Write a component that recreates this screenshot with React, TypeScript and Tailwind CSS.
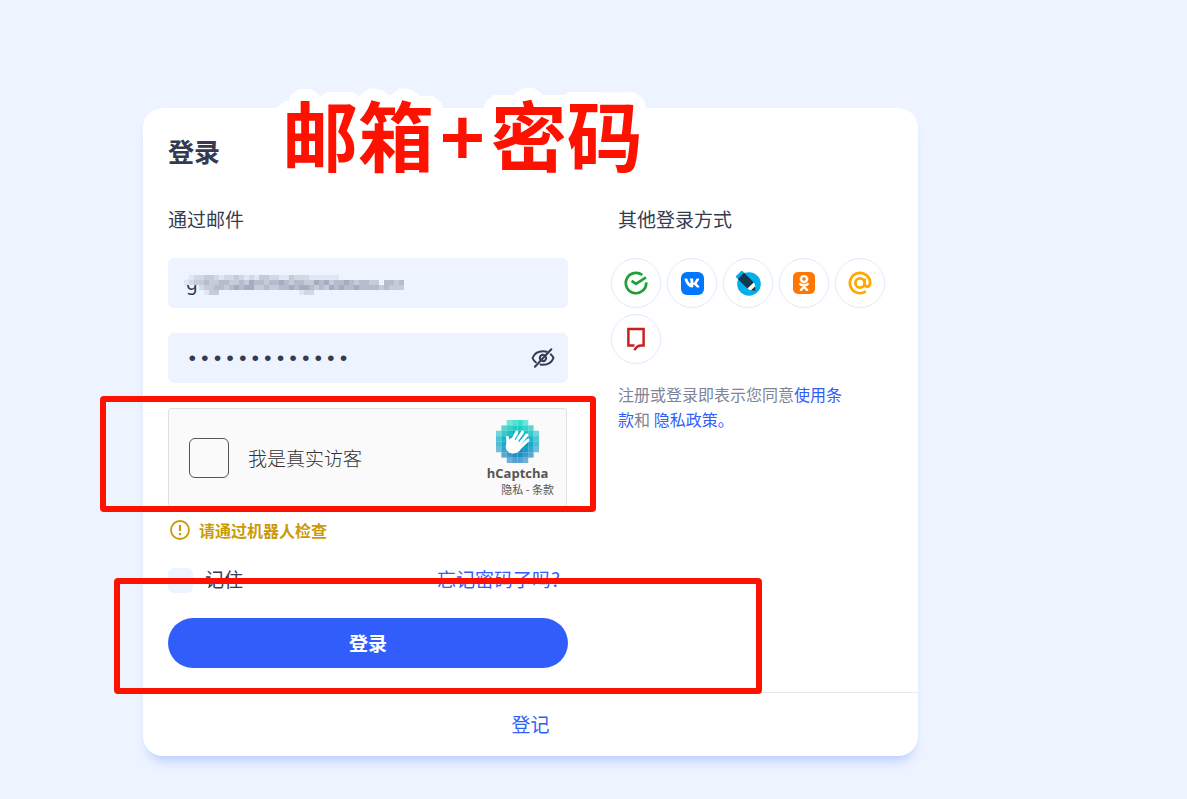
import React, { useState } from 'react';
import { FaOdnoklassniki, FaVk } from 'react-icons/fa';

// 0 is an empty cell, 5 is the darkest one
const mosaicRows = [
  '01223321223212133221132221111110000000000000',
  '12334334433435443445434433545344543443304434',
  '00023344345455334334454554343545445444434333',
  '00001330000000000000000122000000000000000000',
];
const mosaicColors = ['transparent', '#dfe7f4', '#d2d9e6', '#c5cbd9', '#b6bccb', '#a5acbe'];

const captchaRows = [
  { color: '#00D4BF', cells: '00567500' },
  { color: '#00C6BF', cells: '06788760' },
  { color: '#00B9BF', cells: '57899875' },
  { color: '#00ABBF', cells: '68999986' },
  { color: '#009DBF', cells: '68999986' },
  { color: '#008FBF', cells: '57899875' },
  { color: '#0082BF', cells: '06788760' },
  { color: '#0074BF', cells: '00566500' },
];

// Rounded white rim round the big caption
const rim = [6, 12]
  .flatMap((radius) =>
    Array.from({ length: 24 }, (_, i) => {
      const angle = (i * Math.PI) / 12;
      return `${(Math.cos(angle) * radius).toFixed(1)}px ${(Math.sin(angle) * radius).toFixed(1)}px 0 #fff`;
    })
  )
  .join(', ');

function Mosaic() {
  return (
    <svg
      viewBox="0 0 220 20"
      shapeRendering="crispEdges"
      className="absolute left-4 top-[17px] w-[220px] h-5 pointer-events-none"
      aria-hidden="true"
    >
      {mosaicRows.map((row, y) =>
        row.split('').map((level, x) => (
          <rect key={`${x}-${y}`} x={x * 5} y={y * 5} width="5" height="5" fill={mosaicColors[Number(level)]} />
        ))
      )}
    </svg>
  );
}

function CaptchaLogo() {
  return (
    <svg viewBox="0 0 32 32" className="w-[43px] h-[43px]" aria-hidden="true">
      {captchaRows.map((row, y) =>
        row.cells.split('').map((cell, x) => (
          <rect key={`${x}-${y}`} x={x * 4} y={y * 4} width="4" height="4" fill={row.color} opacity={Number(cell) / 9} />
        ))
      )}
      <g stroke="#fff" strokeWidth="2.3" strokeLinecap="round" fill="none">
        <path d="M11.500 16.500L15.500 9" />
        <path d="M14 17.500L19.700 9" />
        <path d="M16.500 19L23 11.200" />
        <path d="M17.500 21L23.800 15" />
        <path d="M8.800 19C9.200 16.500 9 14.800 8.500 13" />
      </g>
      <path
        d="M7.700 17.500c.8-1.700 2.200-2.800 3.500-4.300l9 5.100-2 3.900c-1.700 2.300-4.200 3.100-6.700 2.600C7.900 24 6.400 20.700 7.700 17.500z"
        fill="#fff"
      />
    </svg>
  );
}

function EyeOffIcon() {
  return (
    <svg viewBox="0 0 24 20" className="w-6 h-5" fill="none" stroke="#343b50" strokeWidth="2" strokeLinecap="round">
      <path d="M4.800 14.300C3.200 13 2 11.300 1.500 10 3 6.200 7 3.200 12 3.200c1.400 0 2.600.2 3.800.6" />
      <path d="M19.700 6.300c1.300 1.100 2.300 2.500 2.800 3.700-1.500 3.800-5.500 6.800-10.500 6.800-.9 0-1.700-.1-2.500-.3" />
      <path d="M9.200 11.500a3.200 3.200 0 0 1 4.300-4.300M15.100 9.300a3.200 3.200 0 0 1-3.700 3.800" />
      <path d="M20.300 1.200L3.900 18.800" />
    </svg>
  );
}

function WarningIcon() {
  return (
    <svg viewBox="0 0 20 20" className="w-5 h-5" fill="none" stroke="#cc9a06" strokeWidth="1.800">
      <circle cx="10" cy="10" r="9" />
      <path d="M10 5v6" strokeWidth="2.200" />
      <path d="M10 13v2.200" strokeWidth="2.200" />
    </svg>
  );
}

function SberIcon() {
  return (
    <svg viewBox="0 0 24 24" className="w-6 h-6" fill="none" stroke="#21a038" strokeWidth="2.700">
      <path d="M18.300 4A10.200 10.200 0 1 0 22.200 11.300" />
      <path d="M7.600 9.800l4.400 3 10-6.500" />
    </svg>
  );
}

function VkIcon() {
  return (
    <span className="flex items-center justify-center w-[23px] h-[23px] rounded-[6px] bg-[#0077ff]">
      <FaVk className="w-4 h-4 text-white" />
    </span>
  );
}

function LiveJournalIcon() {
  return (
    <svg viewBox="0 0 26 26" className="w-[26px] h-[26px]">
      <circle cx="14" cy="14" r="11.800" fill="#00b0ea" />
      <path d="M1 6L6 1.300q1-.9 2 .1L9.500 3 3 9 1.300 7.600Q.4 6.800 1 6z" fill="#00b0ea" />
      <path d="M9 2.800L18.800 12.500 12.500 18.500 2.800 9z" fill="#15374a" />
      <path d="M18.800 12.500q1.700 2 1.800 8.500-6-.3-8.100-2.500z" fill="#fff" />
      <path d="M20.200 16.300l.5 4.800-5-.5z" fill="#15374a" />
    </svg>
  );
}

function OkIcon() {
  return (
    <span className="flex items-center justify-center w-[22px] h-[22px] rounded-[5px] bg-[#ff7700]">
      <FaOdnoklassniki className="w-4 h-4 text-white" stroke="#fff" strokeWidth="18" />
    </span>
  );
}

function MailIcon() {
  return (
    <svg viewBox="0 0 24 24" className="w-6 h-6" fill="none" stroke="#ffa800" strokeWidth="2.800">
      <circle cx="12" cy="12" r="4.600" />
      <path d="M16.600 7.500v5.200c0 4.100 5.500 3.600 5.500-.7A10.100 10.100 0 1 0 17.800 20.300" />
    </svg>
  );
}

function RamblerIcon() {
  return (
    <svg viewBox="0 0 20 24" className="w-5 h-6" fill="none" stroke="#c8201e" strokeWidth="2.500">
      <path d="M8.500 18.400H2.400V2.100h15.200v16.300h-2.100c-3.600 0-5.600 1.300-7 4.800" />
    </svg>
  );
}

const providers = [
  { name: 'Sber ID', icon: <SberIcon /> },
  { name: 'VK', icon: <VkIcon /> },
  { name: 'LiveJournal', icon: <LiveJournalIcon /> },
  { name: 'OK', icon: <OkIcon /> },
  { name: 'Mail', icon: <MailIcon /> },
  { name: 'Rambler', icon: <RamblerIcon /> },
];

function Captcha() {
  return (
    <div className="mt-[25px] mr-px h-[99px] flex items-center justify-between rounded border border-b-0 border-[#e0e0e0] bg-[#fafafa] pl-5 pr-3">
      <label className="flex items-center gap-[19px] text-[19px] leading-6 font-light text-[#333]">
        <input
          type="checkbox"
          className="appearance-none w-10 h-10 rounded-[6px] border border-[#555] bg-[#fafafa]"
        />
        我是真实访客
      </label>
      <div className="flex flex-col items-center pb-0.5">
        <CaptchaLogo />
        <span className="font-['Open_Sans','Noto_Sans_CJK_SC',sans-serif] text-[13px] leading-5 font-bold text-[#555]">
          hCaptcha
        </span>
        <span className="pl-5 text-[11px] leading-3 text-[#555] whitespace-nowrap">
          <a href="#privacy">隐私</a> - <a href="#terms">条款</a>
        </span>
      </div>
    </div>
  );
}

export default function App() {
  const [email, setEmail] = useState('g');
  const [password, setPassword] = useState('1234567890123');
  const [visible, setVisible] = useState(false);

  return (
    <div className="min-h-screen bg-[#edf4ff] pt-[108px] pb-[43px] pl-[143px] pr-4 font-['Noto_Sans_CJK_SC',sans-serif] text-[19px] text-[#343b50]">
      <main className="relative w-full max-w-[775px] rounded-[20px] bg-white shadow-[0_10px_12px_-6px_rgba(48,96,255,0.3)]">
        <div className="px-[25px] pt-6 pb-6">
          <h1 className="text-[26px] leading-[38px] font-bold">登录</h1>
          <div className="mt-[37px] flex gap-[43px]">
            <form className="w-[400px] shrink-0" onSubmit={(e) => e.preventDefault()}>
              <h2 className="leading-6">通过邮件</h2>
              <div className="relative mt-[27px]">
                <input
                  type="text"
                  aria-label="邮件"
                  value={email}
                  onChange={(e) => setEmail(e.target.value)}
                  className="block w-full h-[50px] rounded-[6px] bg-[#edf4ff] px-[18px] font-['Noto_Sans','Noto_Sans_CJK_SC',sans-serif] text-[19px]"
                />
                <Mosaic />
              </div>
              <div className="mt-[25px] flex items-center h-[50px] rounded-[6px] bg-[#edf4ff] pl-[18px] pr-[13px]">
                <input
                  type={visible ? 'text' : 'password'}
                  aria-label="密码"
                  value={password}
                  onChange={(e) => setPassword(e.target.value)}
                  className="flex-1 min-w-0 pt-1 bg-transparent font-['Liberation_Mono',monospace] text-[21px]"
                />
                <button type="button" aria-label="显示密码" onClick={() => setVisible(!visible)}>
                  <EyeOffIcon />
                </button>
              </div>

              <Captcha />

              <p className="mt-[13px] pl-0.5 flex items-center gap-[9px] text-base leading-5 font-bold text-[#cc9a06]">
                <WarningIcon />
                请通过机器人检查
              </p>
              <div className="mt-7 flex items-start justify-between h-[25px] pr-2">
                <label className="flex items-start gap-3 leading-[22px]">
                  <input type="checkbox" className="appearance-none w-[25px] h-[25px] rounded-[6px] bg-[#edf4ff]" />
                  记住
                </label>
                <a href="#forgot" className="leading-[22px] text-[#315efb]">忘记密码了吗?</a>
              </div>
              <button type="submit" className="mt-[25px] block w-full h-[50px] rounded-full bg-[#315efb] font-bold text-white">
                登录
              </button>
            </form>

            <section className="flex-1 min-w-0">
              <h2 className="pl-[7px] leading-6">其他登录方式</h2>
              <div className="mt-[27px] flex flex-wrap gap-1.5">
                {providers.map((provider) => (
                  <button
                    key={provider.name}
                    type="button"
                    aria-label={provider.name}
                    className="flex items-center justify-center w-[50px] h-[50px] rounded-full border border-[#dfe9fc]"
                  >
                    {provider.icon}
                  </button>
                ))}
              </div>
              <p className="mt-[18px] ml-[7px] max-w-[235px] text-base leading-[25px] text-[#7d8499]">
                注册或登录即表示您同意<a href="#rules" className="text-[#315efb]">使用条款</a>和{' '}
                <a href="#policy" className="text-[#315efb]">隐私政策。</a>
              </p>
            </section>
          </div>
        </div>
        <div className="flex items-center justify-center h-16 border-t border-[#e6e9f2]">
          <a href="#register" className="text-[#315efb]">登记</a>
        </div>

        {/* Markup over the form */}
        <div className="absolute left-[139px] -top-[30px] flex text-[76px] leading-[110px] font-bold text-[#ff1100] whitespace-nowrap pointer-events-none">
          <span style={{ textShadow: rim }}>邮箱</span>
          <span className="relative z-10 px-1.5">+</span>
          <span style={{ textShadow: rim }}>密码</span>
        </div>
        <div className="absolute -left-[43px] top-[288px] w-[496px] h-[116px] rounded border-[6px] border-[#ff1100] pointer-events-none" />
        <div className="absolute -left-[29px] top-[470px] w-[648px] h-[116px] rounded border-[6px] border-[#ff1100] pointer-events-none" />
      </main>
    </div>
  );
}
